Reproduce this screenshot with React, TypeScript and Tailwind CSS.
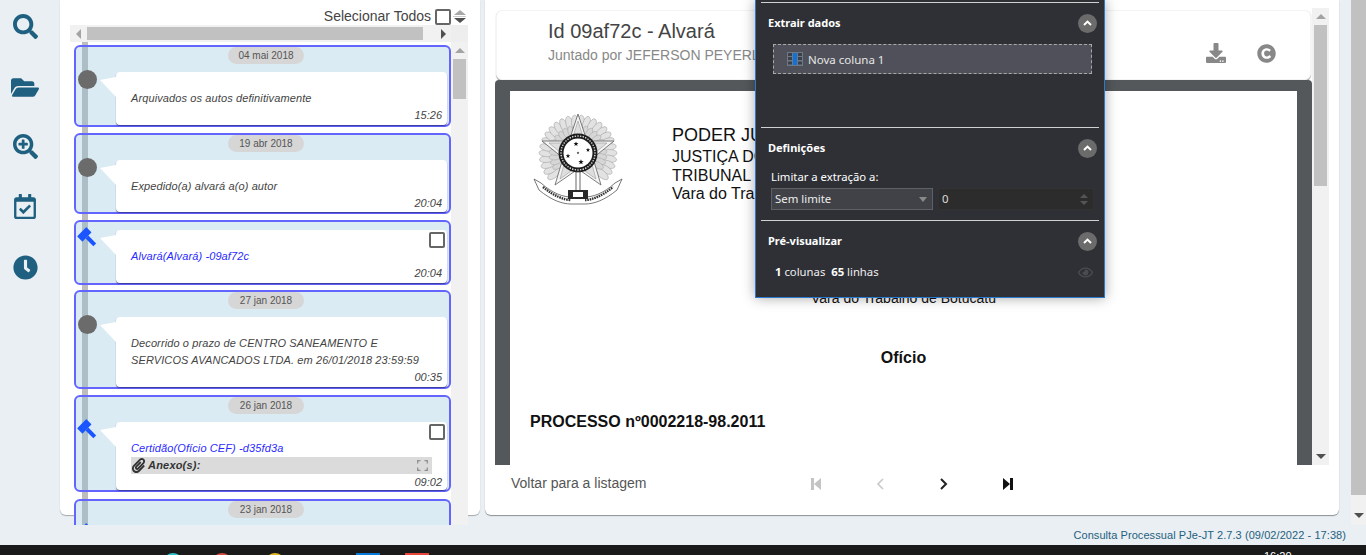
import React from "react";
import { FaSearch, FaFolderOpen, FaSearchPlus, FaRegCalendarCheck, FaClock, FaDownload, FaCopyright, FaPaperclip, FaRegEye } from "react-icons/fa";

const Gavel = () => (
  <svg width="20" height="20" viewBox="0 0 20 20" className="absolute left-[-39px] top-[-2px] overflow-visible">
    <g fill="#1a55ff" transform="translate(-2.5 1.5) rotate(45 10 10)">
      <rect x="2.5" y="0" width="7.5" height="13" rx="0.6" />
      <rect x="10" y="4.5" width="11" height="4" />
    </g>
  </svg>
);

const Dot = () => <div className="absolute left-[-38px] top-[-2px] h-[19px] w-[19px] rounded-full bg-[#6b6b6b]" />;

const Tail = () => (
  <svg width="16" height="20" viewBox="0 0 16 20" className="absolute left-[-16px] top-[5px]">
    <polygon points="0,3 16,0 16,20" fill="#ffffff" />
  </svg>
);

const Box = ({ className }: { className: string }) => (
  <div className={"h-[16px] w-[16px] rounded-[2px] border-2 border-[#666666] bg-white " + className} />
);

type CardProps = {
  date?: string;
  h: number;
  marker: "dot" | "gavel";
  link?: boolean;
  check?: boolean;
  children: React.ReactNode;
  time?: string;
  extra?: React.ReactNode;
  last?: boolean;
};

const Card = ({ date, h, marker, link, check, children, time, extra, last }: CardProps) => (
  <div
    style={{ height: h }}
    className={
      "relative z-10 w-[377px] shrink-0 rounded-[6px] border-2 border-[#6464ff] bg-[rgba(140,194,219,0.32)] " +
      (last ? "rounded-b-none border-b-0" : "")
    }
  >
    {date ? (
      <div className="ml-[152px] flex h-[17px] w-[76px] items-center justify-center rounded-full bg-[#d6d6d6] text-[10px] text-[#555555]">
        {date}
      </div>
    ) : null}
    <div
      className={
        "relative ml-[40px] flex w-[331px] flex-col justify-between rounded-[4px] bg-white pb-[2px] pl-[15px] pr-[5px] pt-[18px] shadow-[0_1px_1px_rgba(40,40,120,0.7)] " +
        (date ? "mt-[8px] h-[calc(100%-25px)]" : "mt-[8px] h-[calc(100%-8px)]")
      }
    >
      {marker === "dot" ? <Dot /> : <Gavel />}
      <Tail />
      {check ? <Box className="absolute right-[2px] top-[2px]" /> : null}
      <div>
        <div className={"text-[11px] italic leading-[17px] tracking-[0.11px] " + (link ? "text-[#2a2aff]" : "text-[#444444]")}>{children}</div>
        {extra}
      </div>
      {time ? <div className="text-right text-[11px] italic leading-[16px] text-[#444444]">{time}</div> : null}
    </div>
  </div>
);

const Timeline = () => (
  <div className="flex h-[517px] w-[398px] shrink-0 flex-col">
    <div className="flex h-[17px] w-full shrink-0 items-center justify-end bg-white">
      <span className="mr-[4px] text-[14px] text-[#444444]">Selecionar Todos</span>
      <div className="h-[16px] w-[16px] rounded-[2px] border-2 border-[#666666]" />
      <div className="mx-[1px] flex h-[16px] w-[15px] flex-col items-center justify-center gap-[1px]">
        <div className="h-0 w-0 border-x-[6px] border-b-[5px] border-x-transparent border-b-[#a8a8a8]" />
        <div className="h-[1px] w-[13px] bg-[#cccccc]" />
        <div className="h-0 w-0 border-x-[6px] border-t-[5px] border-x-transparent border-t-[#505050]" />
      </div>
    </div>
    <div className="flex h-[17px] w-full shrink-0 items-center bg-[#f1f1f1]">
      <div className="flex w-[17px] justify-center">
        <div className="h-0 w-0 border-y-[5px] border-r-[5px] border-y-transparent border-r-[#a3a3a3]" />
      </div>
      <div className="h-[13px] w-[336px] bg-[#c1c1c1]" />
      <div className="flex flex-1 justify-center">
        <div className="ml-[12px] h-0 w-0 border-y-[5px] border-l-[5px] border-y-transparent border-l-[#505050]" />
      </div>
      <div className="h-full w-[17px] bg-[#eeeeee]" />
    </div>
    <div className="flex min-h-0 flex-1">
      <div className="relative flex w-[381px] flex-col gap-[6px] overflow-hidden pl-[4px] pt-[3px]">
        <div className="absolute bottom-0 left-[12px] top-0 z-0 w-[6px] bg-[#bdbdbd]" />
        <Card date="04 mai 2018" h={82} marker="dot" time="15:26">Arquivados os autos definitivamente</Card>
        <Card date="19 abr 2018" h={81} marker="dot" time="20:04">Expedido(a) alvará a(o) autor</Card>
        <Card h={65} marker="gavel" link check time="20:04">Alvará(Alvará) -09af72c</Card>
        <div className="-mt-[1px]">
          <Card date="27 jan 2018" h={99} marker="dot" time="00:35">
            Decorrido o prazo de CENTRO SANEAMENTO E<br />SERVICOS AVANCADOS LTDA. em 26/01/2018 23:59:59
          </Card>
        </div>
        <Card
          date="26 jan 2018"
          h={97}
          marker="gavel"
          link
          check
          time="09:02"
          extra={
            <div className="flex h-[17px] w-[301px] items-center bg-[#dbdbdb]">
              <FaPaperclip className="h-[15px] w-[15px] text-[#333333]" />
              <span className="ml-[2px] text-[11px] font-bold italic tracking-[0.2px] text-[#333333]">Anexo(s):</span>
              <svg width="11" height="11" viewBox="0 0 11 11" className="ml-auto mr-[4px]" fill="none" stroke="#8f8f8f" strokeWidth="1.3">
                <path d="M0.7 3.5V0.7H3.5M7.5 0.7H10.3V3.5M10.3 7.5V10.3H7.5M3.5 10.3H0.7V7.5" />
              </svg>
            </div>
          }
        >
          Certidão(Ofício CEF) -d35fd3a
        </Card>
        <div className="mt-[1px] bg-white">
          <Card date="23 jan 2018" h={60} marker="gavel" last>&nbsp;</Card>
        </div>
      </div>
      <div className="flex w-[17px] flex-col items-center bg-[#f1f1f1]">
        <div className="flex h-[17px] items-center justify-center">
          <div className="h-0 w-0 border-x-[5px] border-b-[5px] border-x-transparent border-b-[#a3a3a3]" />
        </div>
        <div className="h-[40px] w-[13px] bg-[#c1c1c1]" />
      </div>
    </div>
  </div>
);

const MiniStar = ({ x, y, r }: { x: number; y: number; r: number }) => {
  const pts = Array.from({ length: 10 }, (_, i) => {
    const a = (-90 + i * 36) * (Math.PI / 180);
    const d = i % 2 === 0 ? r : r * 0.42;
    return `${x + d * Math.cos(a)},${y + d * Math.sin(a)}`;
  }).join(" ");
  return <polygon points={pts} fill="#111111" />;
};

const Arms = () => {
  const wreath = Array.from({ length: 26 }, (_, i) => -130 + i * 10.4);
  const inner = Array.from({ length: 22 }, (_, i) => -120 + i * 11.4);
  const dots = Array.from({ length: 40 }, (_, i) => i * 9);
  return (
    <svg width="90" height="96" viewBox="0 0 90 96">
      <g transform="translate(45 41)">
        {wreath.map((a) => (
          <g key={a} transform={`rotate(${a})`}>
            <ellipse cx="0" cy="-31" rx="3.6" ry="8" fill="#e2e2e2" stroke="#9a9a9a" strokeWidth="0.5" />
          </g>
        ))}
        {inner.map((a) => (
          <g key={a} transform={`rotate(${a})`}>
            <ellipse cx="0" cy="-23" rx="3" ry="6" fill="#d6d6d6" stroke="#a5a5a5" strokeWidth="0.5" />
          </g>
        ))}
        <polygon
          points="0,-40 9,-13 36,-13 15,4 23,31 0,15 -23,31 -15,4 -36,-13 -9,-13"
          fill="#f4f4f4"
          stroke="#6f6f6f"
          strokeWidth="0.9"
        />
        <polygon
          points="0,-33 7,-11 29,-11 12,3 18,25 0,12 -18,25 -12,3 -29,-11 -7,-11"
          fill="#dedede"
          stroke="#999999"
          strokeWidth="0.6"
        />
        <circle cx="0" cy="-1" r="19.5" fill="#1d1d1d" />
        <circle cx="0" cy="-1" r="14.5" fill="#ffffff" />
        {dots.map((a) => (
          <circle key={a} cx={17 * Math.cos((a * Math.PI) / 180)} cy={-1 + 17 * Math.sin((a * Math.PI) / 180)} r="0.8" fill="#e6e6e6" />
        ))}
        <MiniStar x={-2} y={-10} r={2.6} />
        <MiniStar x={10} y={-4} r={2.2} />
        <MiniStar x={-10} y={2} r={2.4} />
        <MiniStar x={0} y={-1} r={1.4} />
        <MiniStar x={3} y={8} r={2.8} />
        <rect x="-2" y="18" width="4" height="24" fill="#ffffff" stroke="#444444" strokeWidth="0.8" />
        <path d="M-44 25 L-37 29 C-25 40 -14 43 -7 43 L7 43 C14 43 25 40 37 29 L44 25 L39 36 C27 46 16 50 7 50 L-7 50 C-16 50 -27 46 -39 36 Z" fill="#ffffff" stroke="#555555" strokeWidth="0.8" />
        <path d="M-35 33 C-24 42 -14 46 -7 46 M7 46 C14 46 24 42 35 33" fill="none" stroke="#333333" strokeWidth="2.4" strokeDasharray="1.6 0.8" />
        <rect x="-10" y="36" width="20" height="9" fill="#2a2a2a" />
        <rect x="-5" y="38" width="10" height="5" fill="#ffffff" />
      </g>
    </svg>
  );
};

const Toggle = () => (
  <div className="flex h-[19px] w-[19px] items-center justify-center rounded-full bg-[#6b6b6b]">
    <svg width="9" height="6" viewBox="0 0 9 6" fill="none" stroke="#ffffff" strokeWidth="2">
      <path d="M1 5L4.5 1.6L8 5" />
    </svg>
  </div>
);

const Section = ({ title, h, children }: { title: string; h: number; children?: React.ReactNode }) => (
  <div style={{ height: h }} className="mx-[5px] border-t border-[#d0d0d0]">
    <div className="flex h-[40px] items-center justify-between pl-[7px] pr-[2px]">
      <span className="text-[11px] font-bold text-white">{title}</span>
      <Toggle />
    </div>
    {children}
  </div>
);

const Overlay = () => (
  <div className="absolute left-[270px] top-0 z-20 h-[298px] w-[350px] border-x border-b border-[#2a7bd0] bg-[#2e3036] pt-[2px] font-['Noto_Sans',sans-serif] shadow-[0_0_12px_rgba(0,0,0,0.35)]">
    <Section title="Extrair dados" h={125}>
      <div className="ml-[12px] mt-[1px] flex h-[30px] w-[319px] items-center border border-dashed border-[#a9a9a9] bg-[#4f5059] pl-[13px]">
        <svg width="16" height="14" viewBox="0 0 16 14" className="mr-[5px]">
          <rect x="0" y="0" width="16" height="14" fill="#6c7a88" />
          <g fill="#3c4048">
            <rect x="1" y="1" width="4" height="3" />
            <rect x="1" y="5" width="4" height="3" />
            <rect x="1" y="9.5" width="4" height="3" />
            <rect x="11" y="1" width="4" height="3" />
            <rect x="11" y="5" width="4" height="3" />
            <rect x="11" y="9.5" width="4" height="3" />
          </g>
          <rect x="6" y="1" width="4" height="12" fill="#1471d8" />
        </svg>
        <span className="translate-y-[1px] text-[11.5px] text-[#e6e6e6]">Nova coluna 1</span>
      </div>
    </Section>
    <Section title="Definições" h={93}>
      <div className="pl-[10px] text-[11.3px] leading-[17px] text-white">Limitar a extração a:</div>
      <div className="mt-[3px] flex gap-[5px] pl-[10px]">
        <div className="flex h-[22px] w-[162px] items-center justify-between border border-[#5d6066] bg-[#404247] pl-[3px] pr-[5px] text-[11.4px] text-[#eeeeee]">
          Sem limite
          <div className="h-0 w-0 border-x-[4px] border-t-[5px] border-x-transparent border-t-[#8a8a8a]" />
        </div>
        <div className="flex h-[22px] w-[156px] items-center justify-between border border-[#323232] bg-[#2c2c2c] pl-[3px] pr-[5px] text-[11.4px] text-[#dddddd]">
          0
          <div className="flex flex-col gap-[3px]">
            <div className="h-0 w-0 border-x-[4px] border-b-[4px] border-x-transparent border-b-[#555555]" />
            <div className="h-0 w-0 border-x-[4px] border-t-[4px] border-x-transparent border-t-[#555555]" />
          </div>
        </div>
      </div>
    </Section>
    <Section title="Pré-visualizar" h={77}>
      <div className="flex items-center justify-between pl-[14px] pr-[6px] pt-[2px] text-[11.3px] leading-[18px] text-[#eeeeee]">
        <span className="whitespace-pre"><b className="text-white">1</b> colunas  <b className="text-white">65</b> linhas</span>
        <FaRegEye className="h-[15px] w-[15px] text-[#4a4c50]" />
      </div>
    </Section>
  </div>
);

const Pager = () => (
  <div className="ml-[164px] mt-[1px] flex items-center">
    <svg width="11" height="12" viewBox="0 0 11 12" fill="#c4c4c4"><rect x="0" y="0" width="3" height="12" /><polygon points="10,0 10,12 3,6" /></svg>
    <svg width="11" height="14" viewBox="0 0 11 14" fill="none" stroke="#c8c8c8" strokeWidth="1.6" className="ml-[53px]"><path d="M8 2L3 7L8 12" /></svg>
    <svg width="11" height="14" viewBox="0 0 11 14" fill="none" stroke="#222222" strokeWidth="2" className="ml-[52px]"><path d="M3 2L8 7L3 12" /></svg>
    <svg width="11" height="12" viewBox="0 0 11 12" fill="#111111" className="ml-[53px]"><polygon points="1,0 1,12 8,6" /><rect x="8" y="0" width="3" height="12" /></svg>
  </div>
);

const DocPage = () => (
  <div className="ml-[15px] mt-[11px] min-h-0 w-[787px] flex-1 overflow-hidden bg-white text-black">
    <div className="flex pl-[23px] pt-[22px]">
      <Arms />
      <div className="ml-[49px] pt-[11px] text-[#111111]">
        <div className="text-[18px] leading-[23px]">PODER JUDICIÁRIO</div>
        <div className="text-[16px] leading-[19px]">JUSTIÇA DO TRABALHO</div>
        <div className="text-[16px] leading-[19px]">TRIBUNAL REGIONAL DO TRABALHO</div>
        <div className="text-[16px] leading-[17px]">Vara do Trabalho de Botucatu</div>
      </div>
    </div>
    <div className="mt-[81px] text-center text-[14px] leading-[16px] text-[#111111]">Vara do Trabalho de Botucatu</div>
    <div className="mt-[42px] text-center text-[16px] font-bold leading-[20px] text-[#111111]">Ofício</div>
    <div className="ml-[20px] mt-[44px] text-[16px] font-bold leading-[20px] text-[#111111]">PROCESSO nº0002218-98.2011</div>
  </div>
);

const RightPanel = () => (
  <div className="relative flex h-[515px] w-[854px] shrink-0 flex-col rounded-b-[6px] bg-white shadow-[0_1px_1px_rgba(0,0,0,0.4)]">
    <div className="flex h-[465px] shrink-0 pl-[10px] pt-[8px]">
      <div className="flex w-[817px] flex-col">
        <div className="ml-[1px] mt-[2px] flex h-[70px] w-[815px] shrink-0 items-center justify-between rounded-[6px] border border-[#f4f4f4] bg-white pl-[51px] pr-[34px] shadow-[0_1px_1px_rgba(0,0,0,0.4)]">
          <div className="mb-[9px]">
            <div className="text-[20px] leading-[26px] text-[#444444]">Id 09af72c - Alvará</div>
            <div className="mt-[2px] text-[14px] leading-[18px] text-[#888888]">Juntado por JEFERSON PEYERL</div>
          </div>
          <div className="mt-[16px] flex items-center gap-[31px] text-[#888888]">
            <FaDownload className="h-[20px] w-[20px]" />
            <FaCopyright className="h-[19px] w-[19px]" />
          </div>
        </div>
        <div className="flex min-h-0 flex-1 flex-col rounded-t-[4px] bg-[#54585a]">
          <DocPage />
        </div>
      </div>
      <div className="flex w-[17px] flex-col items-center bg-[#f1f1f1]">
        <div className="flex h-[17px] items-center justify-center">
          <div className="h-0 w-0 border-x-[5px] border-b-[5px] border-x-transparent border-b-[#a3a3a3]" />
        </div>
        <div className="h-[161px] w-[13px] bg-[#c1c1c1]" />
        <div className="mt-auto flex h-[17px] items-center justify-center">
          <div className="h-0 w-0 border-x-[5px] border-t-[5px] border-x-transparent border-t-[#505050]" />
        </div>
      </div>
    </div>
    <div className="flex h-[50px] shrink-0 items-center pb-[14px] pl-[26px]">
      <span className="w-[136px] text-[14px] text-[#555555]">Voltar para a listagem</span>
      <Pager />
    </div>
    <Overlay />
  </div>
);

export default function App() {
  return (
    <div className="flex h-[555px] w-[1366px] flex-col overflow-hidden bg-[#e9eff2] font-['Liberation_Sans',Arial,sans-serif]">
      <div className="flex h-[525px] shrink-0">
        <div className="flex w-[60px] shrink-0 flex-col items-center text-[#1f6080]">
          <div className="mr-[10px] flex h-[52px] items-center"><FaSearch className="h-[25px] w-[25px]" /></div>
          <div className="mr-[10px] flex h-[70px] items-center"><FaFolderOpen className="h-[25px] w-[28px]" /></div>
          <div className="mr-[10px] flex h-[48px] items-center"><FaSearchPlus className="h-[25px] w-[25px]" /></div>
          <div className="mr-[10px] flex h-[72px] items-center"><FaRegCalendarCheck className="h-[25px] w-[22px]" /></div>
          <div className="mr-[10px] flex h-[50px] items-center"><FaClock className="h-[25px] w-[25px]" /></div>
        </div>
        <div className="h-[515px] w-[420px] shrink-0 rounded-b-[6px] bg-white pl-[10px] pt-[8px] shadow-[0_1px_1px_rgba(0,0,0,0.3)]">
          <Timeline />
        </div>
        <div className="w-[5px] shrink-0" />
        <RightPanel />
        <div className="w-[12px] shrink-0" />
        <div className="flex w-[15px] shrink-0 flex-col items-center bg-[#f1f1f1]">
          <div className="h-[495px] w-full bg-[#c1c1c1]" />
          <div className="mt-auto flex h-[20px] items-center justify-center">
            <div className="h-0 w-0 border-x-[5px] border-t-[5px] border-x-transparent border-t-[#505050]" />
          </div>
        </div>
      </div>
      <div className="flex h-[20px] shrink-0 items-center justify-end pr-[20px] text-[11px] tracking-[0.07px] text-[#1f6080]">
        Consulta Processual PJe-JT 2.7.3 (09/02/2022 - 17:38)
      </div>
      <div className="flex h-[10px] shrink-0 items-start overflow-hidden bg-[#1a1a1a]">
        <div className="ml-[163px] mt-[8px] h-[20px] w-[20px] rounded-full bg-[#2cc3d0]" />
        <div className="ml-[29px] mt-[8px] h-[20px] w-[20px] rounded-full bg-[#d94b3d]" />
        <div className="ml-[33px] mt-[8px] h-[20px] w-[20px] rounded-full bg-[#e3b81f]" />
        <div className="ml-[71px] mt-[8px] h-[20px] w-[24px] bg-[#0a78d7]" />
        <div className="ml-[25px] mt-[8px] h-[20px] w-[24px] bg-[#e8463a]" />
        <div className="ml-[835px] mt-[4px] text-[11px] leading-[14px] text-white">16:20</div>
      </div>
    </div>
  );
}
